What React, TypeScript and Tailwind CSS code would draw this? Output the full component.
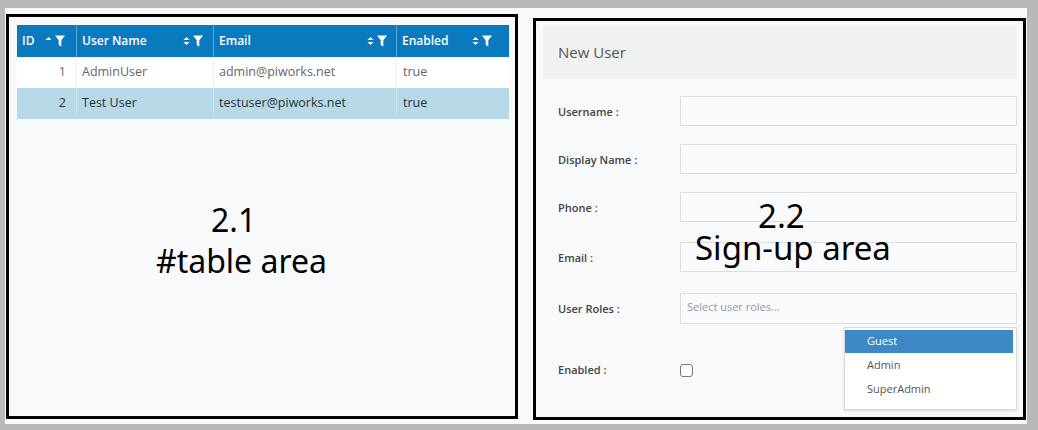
import React from 'react';

type Column = {
  key: 'id' | 'name' | 'email' | 'enabled';
  label: string;
  width: string;
  sort: 'asc' | 'both';
  pr: string;
};

const COLUMNS: Column[] = [
  { key: 'id', label: 'ID', width: 'w-[59px]', sort: 'asc', pr: 'pr-[11px]' },
  { key: 'name', label: 'User Name', width: 'w-[137px]', sort: 'both', pr: 'pr-[10px]' },
  { key: 'email', label: 'Email', width: 'w-[183px]', sort: 'both', pr: 'pr-[9px]' },
  { key: 'enabled', label: 'Enabled', width: 'w-[113px]', sort: 'both', pr: 'pr-[17px]' },
];

const USERS = [
  { id: 1, name: 'AdminUser', email: 'admin@piworks.net', enabled: 'true' },
  { id: 2, name: 'Test User', email: 'testuser@piworks.net', enabled: 'true' },
];

const FIELDS = [
  { label: 'Username :', mt: 'mt-[17px]' },
  { label: 'Display Name :', mt: 'mt-[18px]' },
  { label: 'Phone :', mt: 'mt-[18px]' },
  { label: 'Email :', mt: 'mt-[20px]' },
];

const ui = "font-['Open_Sans','Liberation_Sans',sans-serif]";
const note = "font-['Noto_Sans','DejaVu_Sans',sans-serif]";

function SortIcon({ dir }: { dir: 'asc' | 'both' }) {
  return (
    <svg width="7" height="10" viewBox="0 0 7 10" className="shrink-0">
      <path d="M0.5 4L3.5 1L6.5 4Z" fill="white" />
      {dir === 'both' && <path d="M0.5 6L3.5 9L6.5 6Z" fill="white" />}
    </svg>
  );
}

function FilterIcon() {
  return (
    <svg width="10" height="12" viewBox="0 0 10 12" className="shrink-0">
      <path d="M0 0.5H10L6.3 5.2V11.5L3.7 10V5.2Z" fill="white" />
    </svg>
  );
}

function UserTable() {
  return (
    <div className="w-[492px]">
      <div className="flex h-[32px] bg-[#0b79be]">
        {COLUMNS.map((col, i) => (
          <div
            key={col.key}
            className={`${col.width} ${col.pr} flex items-center justify-between pl-[5px] ${
              i > 0 ? 'border-l border-[#5aa7d6]' : ''
            }`}
          >
            <span className="text-[12px] font-semibold text-white">{col.label}</span>
            <span className="flex items-center gap-[3px]">
              <SortIcon dir={col.sort} />
              <FilterIcon />
            </span>
          </div>
        ))}
      </div>
      {USERS.map(user => {
        const selected = user.id === 2;
        const sep = selected ? 'border-[#d3e7f0]' : 'border-[#eef0f2]';
        return (
          <div
            key={user.id}
            className={`flex h-[31px] text-[12.5px] ${
              selected ? 'bg-[#b6d8e7] text-[#2b3338]' : 'bg-white text-[#666]'
            }`}
          >
            <div className="flex w-[59px] items-center justify-end pr-[10px]">{user.id}</div>
            <div className={`flex w-[137px] items-center border-l pl-[5px] ${sep}`}>{user.name}</div>
            <div className={`flex w-[183px] items-center border-l pl-[5px] ${sep}`}>{user.email}</div>
            <div className={`flex w-[113px] items-center border-l pl-[6px] ${sep}`}>{user.enabled}</div>
          </div>
        );
      })}
    </div>
  );
}

function SignUpForm() {
  return (
    <div className="w-[474px]">
      <div className="flex h-[53px] items-center bg-[#f0f1f3] pl-[15px] text-[15px] text-[#555]">
        New User
      </div>
      <div className="pl-[15px]">
        {FIELDS.map(field => (
          <div key={field.label} className={`flex items-center ${field.mt}`}>
            <div className="w-[122px] pt-[2px] text-[11px] font-semibold text-[#444]">{field.label}</div>
            <div className="h-[30px] flex-1 border border-[#dcdee0] bg-[#f9fafb]" />
          </div>
        ))}
        <div className="mt-[21px] flex items-center">
          <div className="w-[122px] pt-[2px] text-[11px] font-semibold text-[#444]">User Roles :</div>
          <div className="relative h-[31px] flex-1 border border-[#dcdee0] bg-[#f9fafb]">
            <span className="absolute left-[6px] top-[5px] text-[11px] text-[#999]">
              Select user roles...
            </span>
            <div className="absolute left-[163px] top-[33px] z-10 h-[83px] w-[173px] border border-[#d8dadc] bg-white pt-[2px] shadow-sm">
              <div className="mr-[3px] flex h-[23px] items-center bg-[#3f88c6] pl-[22px] text-[11px] text-white">
                Guest
              </div>
              <div className="flex h-[24px] items-center pl-[22px] text-[11px] text-[#555]">Admin</div>
              <div className="flex h-[24px] items-center pl-[22px] text-[11px] text-[#555]">SuperAdmin</div>
            </div>
          </div>
        </div>
        <div className="mt-[38px] flex items-center">
          <div className="w-[122px] text-[11px] font-semibold text-[#444]">Enabled :</div>
          <div className="h-[13px] w-[13px] rounded-[3px] border border-[#777] bg-white" />
        </div>
      </div>
    </div>
  );
}

export default function App() {
  return (
    <div className={`relative h-[430px] w-[1038px] overflow-hidden bg-[#b8b9b9] ${ui}`}>
      <div className="ml-[5px] mt-[8px] h-[416px] w-[1022px] bg-[#f7f9fb] pt-[6px]">
        <div className="flex items-start">
          <section className="relative ml-[1px] h-[405px] w-[512px] border-[3px] border-black pl-[8px] pt-[8px]">
            <UserTable />
            <div className={`absolute left-[147px] top-[182px] text-[32px] leading-[41px] text-black ${note}`}>
              <div className="pl-[55px]">2.1</div>
              <div>#table area</div>
            </div>
          </section>
          <section className="relative ml-[15px] mt-[4px] h-[402px] w-[493px] border-[3px] border-black pl-[7px] pt-[5px]">
            <SignUpForm />
            <div className={`absolute left-[159px] top-[179px] z-20 text-[33px] leading-[32px] text-black ${note}`}>
              <div className="pl-[63px]">2.2</div>
              <div>Sign-up area</div>
            </div>
          </section>
        </div>
      </div>
    </div>
  );
}
